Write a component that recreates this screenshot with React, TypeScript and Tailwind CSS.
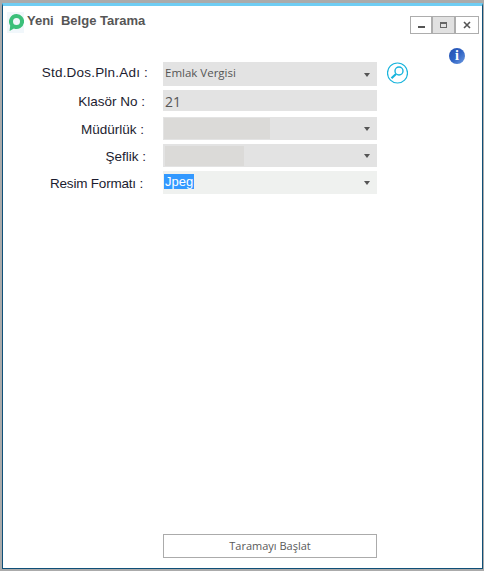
const sans = "font-['Liberation_Sans',Arial,sans-serif]";
const ui = "font-['Open_Sans',sans-serif]";

function Caret() {
  return (
    <svg width="6" height="4" viewBox="0 0 6 4" className="mt-[1px] shrink-0">
      <path d="M0 0h6L3 4z" fill="#555" />
    </svg>
  );
}

function Logo() {
  return (
    <div className="flex h-[21px] w-[17px] items-center justify-end bg-[#f1f7fb]">
      <svg width="15" height="17" viewBox="0 0 15 17">
        <path
          d="M7.5 0a7.5 7.5 0 1 1-2.6 14.5L.6 17l.6-5.5A7.5 7.5 0 0 1 7.5 0zm0 4a3.5 3.5 0 1 0 0 7 3.5 3.5 0 0 0 0-7z"
          fill="#3cc07a"
          fillRule="evenodd"
        />
      </svg>
    </div>
  );
}

function WindowButtons() {
  return (
    <div className="flex h-[18px] border border-[#adadad] bg-white">
      <div className="flex w-[22px] items-center justify-center border-r-2 border-[#adadad]">
        <div className="mt-[3px] h-[2px] w-[7px] bg-[#555]" />
      </div>
      <div className="flex w-[23px] items-center justify-center border-r-2 border-[#adadad] bg-[#e1e1e1]">
        <div className="h-[6px] w-[7px] border border-t-2 border-[#666]" />
      </div>
      <div className="flex w-[22px] items-center justify-center">
        <svg width="8" height="8" viewBox="0 0 8 8">
          <path d="M1 1l6 6M7 1L1 7" stroke="#555" strokeWidth="1.6" />
        </svg>
      </div>
    </div>
  );
}

function SearchIcon() {
  return (
    <svg width="21" height="22" viewBox="0 0 21 22" fill="none" stroke="#18b4dc">
      <circle cx="10.5" cy="11" r="10" strokeWidth="1.2" />
      <circle cx="12" cy="9" r="4" strokeWidth="1.4" />
      <path d="M9 12l-4.5 4.2" strokeWidth="2.2" />
    </svg>
  );
}

function InfoIcon() {
  return (
    <div className="flex h-[16px] w-[16px] items-center justify-center rounded-full bg-gradient-to-br from-[#2350b0] via-[#2f63c4] to-[#6f9be0]">
      <span className="font-['Liberation_Serif',serif] text-[14px] leading-none font-bold text-white">i</span>
    </div>
  );
}

type RowProps = {
  label: string;
  labelClass: string;
  height: string;
  children: React.ReactNode;
  after?: React.ReactNode;
};

function Row({ label, labelClass, height, children, after }: RowProps) {
  return (
    <div className={`flex items-center ${height}`}>
      <div className={`w-[160px] text-right text-[13.5px] text-[#1c1c30] ${sans} ${labelClass}`}>{label}</div>
      {children}
      {after}
    </div>
  );
}

export default function App() {
  return (
    <div className="h-[571px] w-[484px] overflow-hidden bg-[#ababab] pt-[3px] pr-[1px] pb-[2px] pl-[2px]">
      <div className="flex h-full flex-col border-x border-b border-t-[3px] border-x-[#0f4f78] border-b-[#0f4f78] border-t-[#6fcdf3] bg-white">
        {/* Title bar */}
        <div className="flex items-start justify-between pt-[5px] pr-[3px] pl-[4px]">
          <div className="flex items-center gap-[3px]">
            <Logo />
            <span className={`mb-[3px] text-[13px] font-bold whitespace-pre text-[#565656] ${sans}`}>Yeni  Belge Tarama</span>
          </div>
          <div className="mt-[5px]">
            <WindowButtons />
          </div>
        </div>

        <div className="mt-[14px] flex justify-end pr-[17px]">
          <InfoIcon />
        </div>

        {/* Form */}
        <div className="mt-[-2px] flex flex-col">
          <Row
            label="Std.Dos.Pln.Adı :"
            labelClass="pr-[15px] pb-[2px] tracking-[0.2px]"
            height="h-[24px]"
            after={<div className="mb-[2px] ml-[10px]"><SearchIcon /></div>}
          >
            <div className={`flex h-[24px] w-[214px] items-center justify-between bg-[#e3e3e3] pr-[7px] pl-[2px] text-[11.5px] text-[#555] ${ui}`}>
              <span className="pb-[2px]">Emlak Vergisi</span>
              <Caret />
            </div>
          </Row>
          <div className="mt-[4px]">
            <Row label="Klasör No :" labelClass="pt-[4px] pr-[18px]" height="h-[21px]">
              <div className={`flex h-[21px] w-[214px] items-center bg-[#e3e3e3] pt-[2px] pl-[2px] text-[14px] text-[#555] ${ui}`}>21</div>
            </Row>
          </div>
          <div className="mt-[6px]">
            <Row label="Müdürlük :" labelClass="pt-[4px] pr-[19px]" height="h-[23px]">
              <div className="flex h-[23px] w-[214px] items-center justify-between bg-[#e3e3e3] pr-[7px] pl-[1px]">
                <div className="h-[21px] w-[106px] bg-[#dbdad8]" />
                <Caret />
              </div>
            </Row>
          </div>
          <div className="mt-[4px]">
            <Row label="Şeflik :" labelClass="pt-[4px] pr-[17px]" height="h-[23px]">
              <div className="flex h-[23px] w-[214px] items-center justify-between bg-[#e3e3e3] pr-[7px] pl-[2px]">
                <div className="h-[20px] w-[79px] bg-[#dbdad8]" />
                <Caret />
              </div>
            </Row>
          </div>
          <div className="mt-[4px]">
            <Row label="Resim Formatı :" labelClass="pt-[3px] pr-[20px] tracking-[-0.2px]" height="h-[23px]">
              <div className={`flex h-[23px] w-[214px] items-center justify-between bg-[#eff1ef] pr-[7px] pl-[1px] text-[13px] leading-[15px] ${sans}`}>
                <span className="mb-[2px] bg-[#3399ff] pr-[1px] pl-[1px] text-white">Jpeg</span>
                <Caret />
              </div>
            </Row>
          </div>
        </div>

        {/* Action */}
        <div className="mt-auto mb-[10px] pl-[160px]">
          <button className={`h-[24px] w-[214px] border border-[#ababab] bg-white text-[11px] text-[#5a5a5a] ${ui}`}>
            Taramayı Başlat
          </button>
        </div>
      </div>
    </div>
  );
}
